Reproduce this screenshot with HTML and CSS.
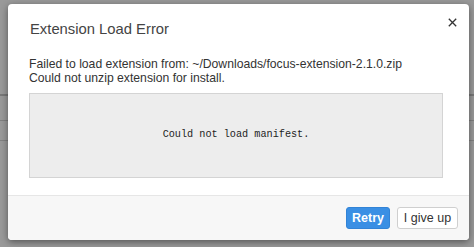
FILE: index.html
```html
<!DOCTYPE html>
<html lang="en">
<head>
  <meta charset="utf-8">
  <title>Extension Load Error</title>
  <link rel="stylesheet" href="styles.css">
</head>
<body>
  <div class="page">
    <div class="page-top"></div>
    <div class="page-bar"><span class="tab">Installed</span></div>
    <div class="page-row"></div>
  </div>

  <div class="backdrop"></div>

  <div class="dialog">
    <div class="dialog-header">
      <h1 class="dialog-title">Extension Load Error</h1>
      <button class="close" aria-label="Close">
        <svg width="9" height="9" viewBox="0 0 9 9">
          <path d="M0.8 0.8 L8.2 8.2 M8.2 0.8 L0.8 8.2" stroke="#333" stroke-width="1.3" fill="none"/>
        </svg>
      </button>
    </div>

    <div class="dialog-body">
      <p>Failed to load extension from: ~/Downloads/focus-extension-2.1.0.zip</p>
      <p>Could not unzip extension for install.</p>
      <div class="error-box">Could not load manifest.</div>
    </div>

    <div class="dialog-footer">
      <button class="btn btn-primary">Retry</button>
      <button class="btn btn-cancel">I give up</button>
    </div>
  </div>
</body>
</html>
```

FILE: styles.css
```css
* {
  margin: 0;
  padding: 0;
  box-sizing: border-box;
}

html, body {
  height: 100%;
  overflow: hidden;
}

body {
  background: #fff;
  font-family: "Liberation Sans", Arial, sans-serif;
  position: relative;
}

.page-top {
  height: 94px;
}

.page-bar {
  height: 27px;
  border-top: 2px solid #c8c8c8;
  border-bottom: 1px solid #d4d4d4;
  display: flex;
  align-items: center;
  font-size: 12px;
  color: #222;
  margin-left: -47px;
}

.page-row {
  height: 20px;
  border-bottom: 1px solid #d8d8d8;
}

.backdrop {
  position: absolute;
  inset: 0;
  background: rgba(0, 0, 0, 0.4);
}

.dialog {
  position: absolute;
  left: 8px;
  top: 4px;
  width: 461px;
  height: 236px;
  background: #fff;
  border-radius: 4px;
  box-shadow: 0 2px 7px rgba(0, 0, 0, 0.45);
  display: flex;
  flex-direction: column;
  overflow: hidden;
}

.dialog-header {
  display: flex;
  justify-content: space-between;
  padding: 15px 11px 0 22px;
}

.dialog-title {
  font-size: 14.8px;
  font-weight: normal;
  line-height: 20px;
  color: #444;
}

.close {
  border: none;
  background: none;
  width: 9px;
  height: 9px;
  margin-top: -1px;
  margin-right: 1px;
  display: flex;
}

.dialog-body {
  padding: 18px 26px 0 21px;
  font-size: 12.2px;
  line-height: 14px;
  color: #333;
  flex: 1;
}

.error-box {
  margin-top: 8px;
  height: 85px;
  background: #ededed;
  border: 1px solid #d4d4d4;
  display: flex;
  align-items: center;
  justify-content: center;
  font-family: "Liberation Mono", "Courier New", monospace;
  font-size: 10.2px;
  color: #1e1e1e;
  padding-bottom: 1px;
}

.dialog-footer {
  height: 45px;
  background: #f7f7f7;
  border-top: 1px solid #e6e6e6;
  display: flex;
  justify-content: flex-end;
  align-items: center;
  gap: 7px;
  padding: 0 11px 1px 0;
}

.btn {
  height: 22px;
  padding: 0;
  white-space: nowrap;
  border: 1px solid #cfcfcf;
  border-radius: 3px;
  background: #fff;
  font-family: "Liberation Sans", Arial, sans-serif;
  font-size: 12.5px;
  color: #333;
}

.btn-cancel {
  width: 61px;
}

.btn-primary {
  width: 44px;
  background: #3a8fe4;
  border-color: #3283d6;
  color: #fff;
  font-weight: bold;
}
```
